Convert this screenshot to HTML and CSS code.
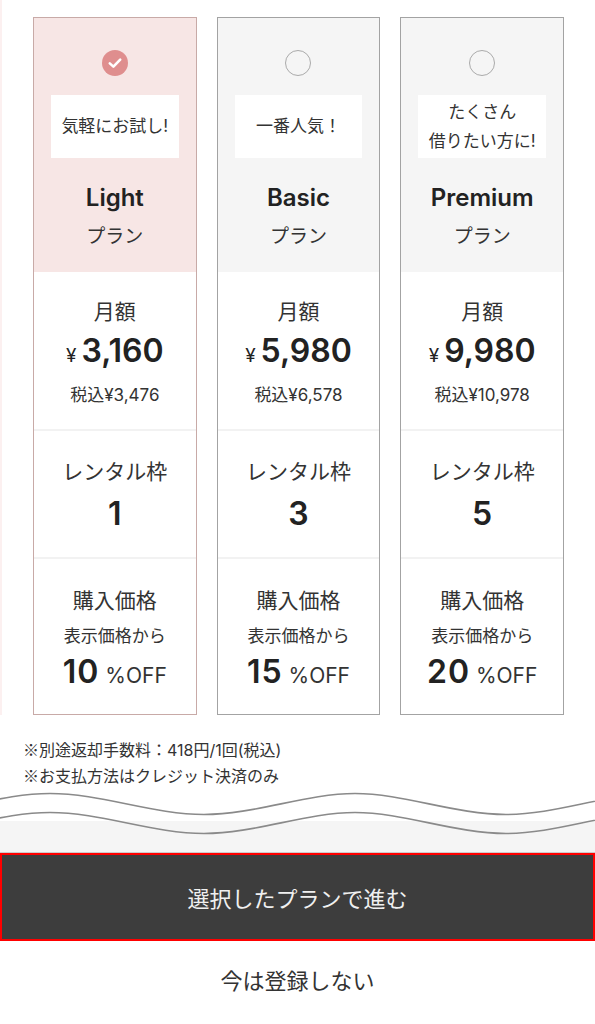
FILE: index.html
```html
<!DOCTYPE html>
<html lang="ja">
<head>
    <meta charset="UTF-8">
    <meta name="viewport" content="width=device-width, initial-scale=1.0">
    <title>プラン選択</title>
    <link rel="stylesheet" href="styles.css">
</head>
<body>
<div class="plans">
    <div class="plan selected">
        <div class="plan-head">
            <span class="radio checked">
                <svg width="16" height="16" viewBox="0 0 16 16"><path d="M2.8 8.4 L6.4 11.6 L13.2 4.6" fill="none" stroke="#fff" stroke-width="2.6" stroke-linecap="round" stroke-linejoin="round"/></svg>
            </span>
            <div class="tag">気軽にお試し!</div>
            <div class="plan-name">Light</div>
            <div class="plan-sub">プラン</div>
        </div>
        <div class="row price-row">
            <div class="label">月額</div>
            <div class="price"><span class="yen">¥</span>3,160</div>
            <div class="small">税込¥3,476</div>
        </div>
        <div class="row slot-row">
            <div class="label">レンタル枠</div>
            <div class="big">1</div>
        </div>
        <div class="row off-row">
            <div class="label">購入価格</div>
            <div class="small">表示価格から</div>
            <div class="off"><span class="big">10</span> %OFF</div>
        </div>
    </div>

    <div class="plan">
        <div class="plan-head">
            <span class="radio"></span>
            <div class="tag">一番人気！</div>
            <div class="plan-name">Basic</div>
            <div class="plan-sub">プラン</div>
        </div>
        <div class="row price-row">
            <div class="label">月額</div>
            <div class="price"><span class="yen">¥</span>5,980</div>
            <div class="small">税込¥6,578</div>
        </div>
        <div class="row slot-row">
            <div class="label">レンタル枠</div>
            <div class="big">3</div>
        </div>
        <div class="row off-row">
            <div class="label">購入価格</div>
            <div class="small">表示価格から</div>
            <div class="off"><span class="big">15</span> %OFF</div>
        </div>
    </div>

    <div class="plan">
        <div class="plan-head">
            <span class="radio"></span>
            <div class="tag">たくさん<br>借りたい方に!</div>
            <div class="plan-name">Premium</div>
            <div class="plan-sub">プラン</div>
        </div>
        <div class="row price-row">
            <div class="label">月額</div>
            <div class="price"><span class="yen">¥</span>9,980</div>
            <div class="small">税込¥10,978</div>
        </div>
        <div class="row slot-row">
            <div class="label">レンタル枠</div>
            <div class="big">5</div>
        </div>
        <div class="row off-row">
            <div class="label">購入価格</div>
            <div class="small">表示価格から</div>
            <div class="off"><span class="big">20</span> %OFF</div>
        </div>
    </div>
</div>

<div class="notes">
    <p><span class="mark">※</span>別途返却手数料：418円/1回(税込)</p>
    <p><span class="mark">※</span>お支払方法はクレジット決済のみ</p>
</div>

<div class="wave">
    <svg width="595" height="64" viewBox="0 0 595 64">
        <path d="M-101,26.5 C-50,26.5 -1,5.5 50,5.5 C101,5.5 153,26.5 204,26.5 S306,5.5 355,5.5 S455,26.5 506,26.5 S606,5.5 657,5.5" fill="none" stroke="#8a8a8a" stroke-width="1.6"/>
        <path d="M-101,45.5 C-50,45.5 -1,24.5 50,24.5 C101,24.5 153,45.5 204,45.5 S306,24.5 355,24.5 S455,45.5 506,45.5 S606,24.5 657,24.5" fill="none" stroke="#8a8a8a" stroke-width="1.6"/>
    </svg>
</div>

<button class="next">選択したプランで進む</button>
<div class="skip">今は登録しない</div>
</body>
</html>
```

FILE: styles.css
```css
body {
    margin: 0;
    background: #fff;
    color: #333;
    font-family: Inter, "Noto Sans CJK JP", sans-serif;
}

.plans {
    display: grid;
    grid-template-columns: repeat(3, 1fr);
    gap: 20px;
    padding: 17px 31px 0 31px;
    border-left: 2px solid #fcf0f0;
}

.plan {
    border: 1px solid #a3a3a3;
    background: #fff;
    text-align: center;
}

.plan.selected {
    border-color: #c8aaa7;
}

.plan-head {
    background: #f5f5f5;
    padding: 32px 17px 20px;
    display: flex;
    flex-direction: column;
    align-items: center;
}

.selected .plan-head {
    background: #f7e6e5;
}

.radio {
    width: 24px;
    height: 24px;
    border: 1px solid #aaa;
    border-radius: 50%;
    display: flex;
    align-items: center;
    justify-content: center;
}

.radio.checked {
    width: 26px;
    height: 26px;
    border: none;
    background: #df8e8e;
}

.tag {
    align-self: stretch;
    margin-top: 19px;
    height: 63px;
    background: #fff;
    display: flex;
    align-items: center;
    justify-content: center;
    font-size: 17px;
    line-height: 29px;
    color: #333;
}

.plan-name {
    margin-top: 24px;
    font-size: 24px;
    line-height: 32px;
    font-weight: 600;
    color: #222;
}

.plan-sub {
    font-size: 19px;
    line-height: 30px;
    margin-top: 8px;
}

.row {
    display: flex;
    flex-direction: column;
    align-items: center;
    border-top: 2px solid #f2f2f2;
}

.plan-head + .row {
    border-top: none;
}

.label {
    font-size: 21px;
    line-height: 30px;
}

.small {
    font-size: 17px;
    line-height: 30px;
}

.price-row {
    height: 157px;
    padding-top: 25px;
    box-sizing: border-box;
}

.price {
    font-size: 32px;
    line-height: 48px;
    font-weight: 600;
    color: #222;
}

.yen {
    font-size: 19px;
    font-weight: 400;
    margin-right: 5px;
}

.slot-row {
    height: 128px;
    padding-top: 26px;
    box-sizing: border-box;
}

.big {
    font-size: 32px;
    line-height: 54px;
    font-weight: 600;
    color: #222;
}

.off-row {
    height: 157px;
    padding-top: 27px;
    box-sizing: border-box;
}

.off-row .small {
    line-height: 40px;
}

.off {
    font-size: 21px;
    line-height: 32px;
}

.off .big {
    line-height: 32px;
    letter-spacing: 1px;
}

.notes {
    padding: 21px 23px 0;
    font-size: 16px;
    line-height: 26px;
}

.notes p {
    margin: 0;
    height: 26px;
}

.mark {
    font-family: "Noto Sans CJK JP", sans-serif;
}

.wave {
    background: linear-gradient(#fff 33px, #f5f5f5 33px);
    border-bottom: 1px solid #ccc;
    height: 64px;
}

.wave svg {
    display: block;
}

.next {
    display: block;
    width: 100%;
    height: 88px;
    margin: 0;
    border: 2px solid #f00;
    background: #3d3d3d;
    color: #f0f0f0;
    font-family: inherit;
    font-size: 22px;
}

.skip {
    margin-top: 25px;
    text-align: center;
    font-size: 22px;
    line-height: 30px;
    color: #333;
}
```
